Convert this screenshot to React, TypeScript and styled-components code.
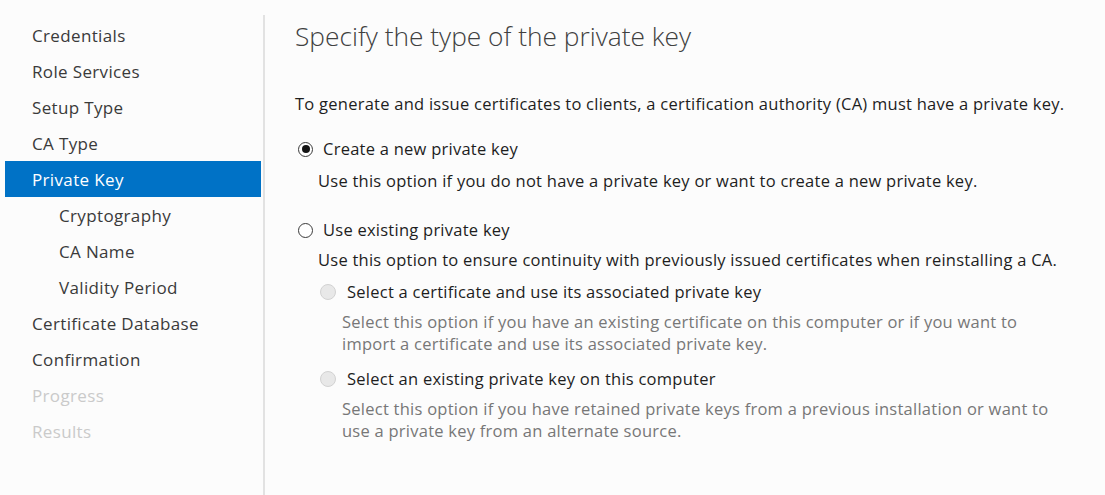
import React from "react";
import styled, { createGlobalStyle } from "styled-components";

const Global = createGlobalStyle`
  html, body { margin: 0; padding: 0; background: #fcfcfc; }
  body { font-family: "Open Sans", "Noto Sans", sans-serif; color: #1e1e1e; }
`;

const Page = styled.div`
  display: flex;
  width: 1105px;
  height: 495px;
  background: #fcfcfc;
  overflow: hidden;
`;

const Sidebar = styled.nav`
  width: 256px;
  padding: 17px 2px 0 5px;
  display: flex;
  flex-direction: column;
`;

const NavItem = styled.div<{ $level?: number; $active?: boolean; $disabled?: boolean }>`
  height: 36px;
  display: flex;
  align-items: center;
  padding-left: ${(p) => (p.$level ? 54 : 27)}px;
  font-size: 17px;
  letter-spacing: 0.35px;
  background: ${(p) => (p.$active ? "#0072c6" : "transparent")};
  color: ${(p) => (p.$active ? "#ffffff" : p.$disabled ? "#cacaca" : "#3a3a3a")};
`;

const Divider = styled.div`
  width: 2px;
  margin-top: 15px;
  background: #e2e2e2;
  align-self: stretch;
`;

const Main = styled.main`
  flex: 1;
  padding: 18px 0 0 30px;
  display: flex;
  flex-direction: column;
`;

const Title = styled.h1`
  margin: 0;
  font-size: 26.3px;
  font-weight: 300;
  color: #404040;
  line-height: 36px;
`;

const Text = styled.p`
  margin: 0;
  font-size: 16.5px;
  letter-spacing: 0.25px;
  line-height: 22px;
`;

const Intro = styled(Text)`
  margin-top: 39px;
`;

const Option = styled.div<{ $indent?: number; $gap: number }>`
  margin-left: ${(p) => p.$indent ?? 0}px;
  margin-top: ${(p) => p.$gap}px;
  display: flex;
  flex-direction: column;
`;

const RadioRow = styled.label<{ $sub?: boolean }>`
  display: flex;
  align-items: center;
  gap: ${(p) => (p.$sub ? 11 : 10)}px;
  padding-left: ${(p) => (p.$sub ? 0 : 3)}px;
  font-size: 16.5px;
  letter-spacing: 0.25px;
  line-height: 22px;
  color: #1e1e1e;
`;

const Radio = styled.span<{ $checked?: boolean; $disabled?: boolean }>`
  width: ${(p) => (p.$disabled ? 16 : 15)}px;
  height: ${(p) => (p.$disabled ? 16 : 15)}px;
  border-radius: 50%;
  box-sizing: border-box;
  border: 1px solid ${(p) => (p.$disabled ? "#d2d2d2" : "#3a3a3a")};
  background: ${(p) => (p.$disabled ? "#e8e8e8" : "#ffffff")};
  display: flex;
  align-items: center;
  justify-content: center;
  flex: none;
  &::after {
    content: "";
    display: ${(p) => (p.$checked ? "block" : "none")};
    width: 8px;
    height: 8px;
    border-radius: 50%;
    background: #141414;
  }
`;

const Desc = styled(Text)<{ $muted?: boolean; $gap: number; $pad?: number }>`
  margin-top: ${(p) => p.$gap}px;
  padding-left: ${(p) => p.$pad ?? 23}px;
  color: ${(p) => (p.$muted ? "#777777" : "#1e1e1e")};
`;

const nav: { label: string; level?: number; active?: boolean; disabled?: boolean }[] = [
  { label: "Credentials" },
  { label: "Role Services" },
  { label: "Setup Type" },
  { label: "CA Type" },
  { label: "Private Key", active: true },
  { label: "Cryptography", level: 1 },
  { label: "CA Name", level: 1 },
  { label: "Validity Period", level: 1 },
  { label: "Certificate Database" },
  { label: "Confirmation" },
  { label: "Progress", disabled: true },
  { label: "Results", disabled: true },
];

export default function App() {
  return (
    <Page>
      <Global />
      <Sidebar>
        {nav.map((n) => (
          <NavItem key={n.label} $level={n.level} $active={n.active} $disabled={n.disabled}>
            {n.label}
          </NavItem>
        ))}
      </Sidebar>
      <Divider />
      <Main>
        <Title>Specify the type of the private key</Title>
        <Intro>
          To generate and issue certificates to clients, a certification authority (CA) must have a private key.
        </Intro>
        <Option $gap={23}>
          <RadioRow>
            <Radio $checked />
            Create a new private key
          </RadioRow>
          <Desc $gap={10}>
            Use this option if you do not have a private key or want to create a new private key.
          </Desc>
        </Option>
        <Option $gap={27}>
          <RadioRow>
            <Radio />
            Use existing private key
          </RadioRow>
          <Desc $gap={8}>
            Use this option to ensure continuity with previously issued certificates when reinstalling a CA.
          </Desc>
          <Option $indent={25} $gap={10}>
            <RadioRow $sub>
              <Radio $disabled />
              Select a certificate and use its associated private key
            </RadioRow>
            <Desc $muted $gap={8} $pad={22}>
              Select this option if you have an existing certificate on this computer or if you want to
              <br />
              import a certificate and use its associated private key.
            </Desc>
          </Option>
          <Option $indent={25} $gap={13}>
            <RadioRow $sub>
              <Radio $disabled />
              Select an existing private key on this computer
            </RadioRow>
            <Desc $muted $gap={8} $pad={22}>
              Select this option if you have retained private keys from a previous installation or want to
              <br />
              use a private key from an alternate source.
            </Desc>
          </Option>
        </Option>
      </Main>
    </Page>
  );
}
